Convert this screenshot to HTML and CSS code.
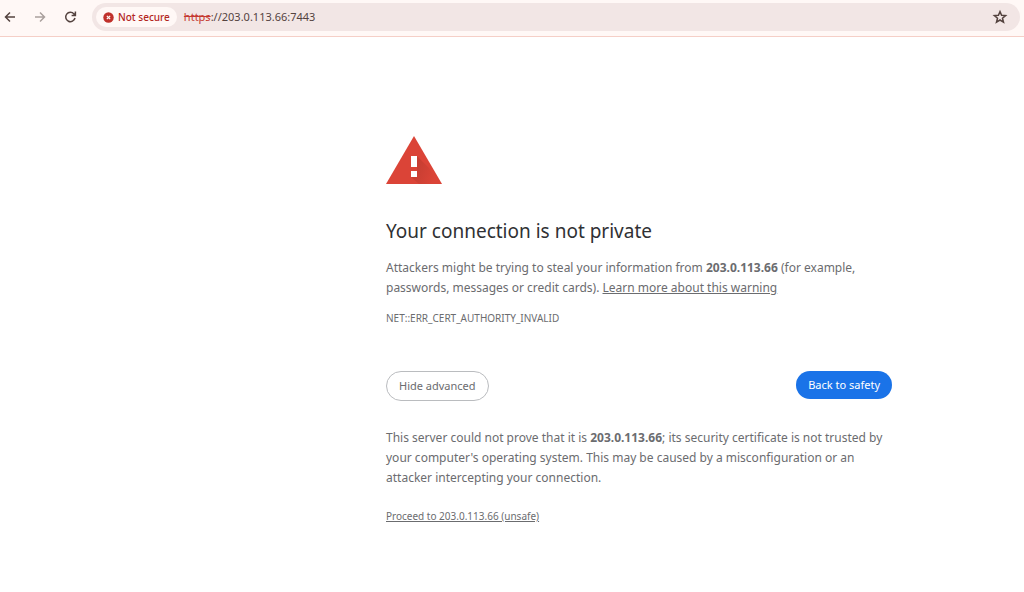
FILE: index.html
```html
<!DOCTYPE html>
<html lang="en">
<head>
    <meta charset="UTF-8">
    <meta name="viewport" content="width=device-width, initial-scale=1.0">
    <title>Privacy error</title>
    <link rel="stylesheet" href="styles.css">
</head>
<body>

    <!-- Browser toolbar -->
    <header class="toolbar">
        <button type="button" class="nav-button" aria-label="Back">
            <svg viewBox="0 0 16 16" width="16" height="16"><path d="M13 8H4M8 3.5L3.5 8L8 12.5"/></svg>
        </button>
        <button type="button" class="nav-button" aria-label="Forward" disabled>
            <svg viewBox="0 0 16 16" width="16" height="16"><path d="M3 8h9M8 3.5L12.5 8L8 12.5"/></svg>
        </button>
        <button type="button" class="nav-button" aria-label="Reload">
            <svg viewBox="0 0 16 16" width="16" height="16"><path d="M13 9A4.7 4.7 0 1 1 12 4.9L13.4 6.3M13.4 2.6V6.4H9.6"/></svg>
        </button>

        <div class="address-bar">
            <button type="button" class="security-chip">
                <svg viewBox="0 0 12 12" width="11" height="11">
                    <circle cx="6" cy="6" r="5.7" fill="#c0302b"/>
                    <path d="M4.2 4.2L7.8 7.8M7.8 4.2L4.2 7.8" stroke="#fff8f6" stroke-width="1.4"/>
                </svg>
                Not secure
            </button>
            <label for="url" class="scheme">https</label>
            <input type="text" id="url" class="url" value="://203.0.113.66:7443" spellcheck="false">
            <button type="button" class="star-button" aria-label="Bookmark this tab">
                <svg viewBox="0 0 16 16" width="16" height="16"><path d="M8 2.6L9.6 6.3L13.6 6.6L10.5 9.2L11.5 13.2L8 11L4.5 13.2L5.5 9.2L2.4 6.6L6.4 6.3Z"/></svg>
            </button>
        </div>
    </header>

    <!-- Warning page -->
    <main class="warning">
        <svg class="warning-icon" viewBox="0 0 56 48" width="56" height="48" role="img" aria-label="Warning">
            <path d="M28 0L56 48H0Z" fill="#db4437"/>
            <path d="M31 20L43 32L52.5 48H33L25 41H31Z" fill="url(#shade)"/>
            <path d="M25 20h6v11h-6zM25 35h6v6h-6z" fill="#fff"/>
            <defs>
                <linearGradient id="shade" x1="0" y1="0" x2="1" y2="0.4">
                    <stop offset="0.2" stop-color="#c43d31"/>
                    <stop offset="1" stop-color="#db4437"/>
                </linearGradient>
            </defs>
        </svg>

        <h1>Your connection is not private</h1>
        <p>Attackers might be trying to steal your information from <strong>203.0.113.66</strong> (for example,<br>passwords, messages or credit cards). <a href="#">Learn more about this warning</a></p>
        <p class="error-code">NET::ERR_CERT_AUTHORITY_INVALID</p>

        <div class="actions">
            <button type="button" class="button secondary">Hide advanced</button>
            <button type="button" class="button primary">Back to safety</button>
        </div>

        <p>This server could not prove that it is <strong>203.0.113.66</strong>; its security certificate is not trusted by<br>your computer's operating system. This may be caused by a misconfiguration or an<br>attacker intercepting your connection.</p>
        <p class="proceed"><a href="#">Proceed to 203.0.113.66 (unsafe)</a></p>
    </main>

</body>
</html>
```
FILE: styles.css
```css
* {
    box-sizing: border-box;
}
body {
    margin: 0;
    background-color: #fff;
    color: #6b6c6f;
    font-family: "Noto Sans", sans-serif;
    font-size: 12px;
    line-height: 20px;
}
button, input {
    font: inherit;
    color: inherit;
    padding: 0;
    border: none;
    background: none;
}
button {
    cursor: pointer;
}
svg {
    display: block;
}

/* Toolbar */
.toolbar {
    display: flex;
    align-items: center;
    gap: 14px;
    padding: 3px 4px 5px 2px;
    background-color: #fff8f6;
    border-bottom: 1px solid #f5cfc7;
    color: #54433f;
}
.nav-button svg, .star-button svg {
    fill: none;
    stroke: currentColor;
    stroke-width: 1.5;
}
.nav-button:disabled {
    color: #aaa09d;
}
.address-bar {
    flex: 1;
    display: flex;
    align-items: center;
    height: 28px;
    padding: 0 12px 0 4px;
    border-radius: 14px;
    background-color: #f2e6e5;
}
.security-chip {
    display: flex;
    align-items: center;
    gap: 4px;
    height: 20px;
    margin-right: 7px;
    padding: 0 7px;
    border-radius: 10px;
    background-color: #fff8f6;
    color: #b3261e;
    font-size: 10px;
    font-weight: 500;
}
.scheme {
    color: #c5392f;
    font-size: 11px;
    text-decoration: line-through;
}
.url {
    flex: 1;
    min-width: 0;
    font-size: 11px;
    outline: none;
}

/* Warning */
.warning {
    max-width: 506px;
    margin: 99px 132px 0 auto;
}
h1 {
    margin: 33px 0 13px;
    color: #303134;
    font-size: 19px;
    font-weight: 400;
    line-height: 28px;
}
p {
    margin: 0 0 10px;
}
a {
    color: inherit;
}
.error-code {
    font-size: 10px;
}
.actions {
    display: flex;
    justify-content: space-between;
    align-items: flex-start;
    margin: 43px 0 27px;
}
.button {
    padding: 4px 12px;
    border-radius: 15px;
    font-size: 11px;
}
.secondary {
    border: 1px solid #babcbf;
}
.primary {
    background-color: #1a73e8;
    color: #fff;
}
.proceed {
    margin-top: 18px;
    font-size: 10px;
}
```
